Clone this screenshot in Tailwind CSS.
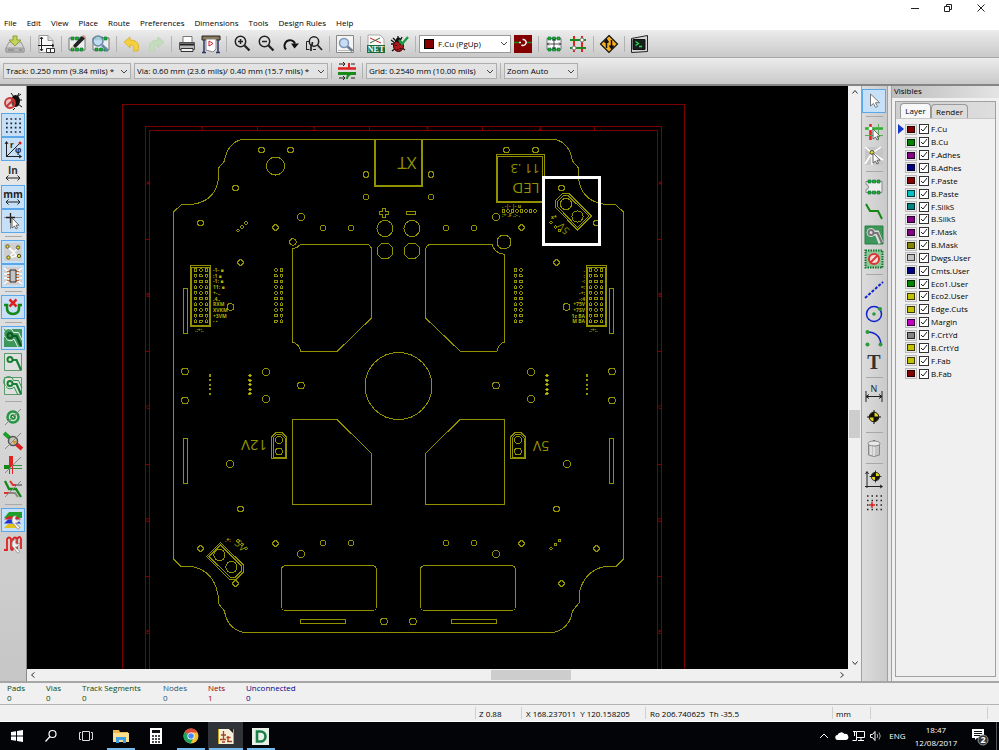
<!DOCTYPE html>
<html lang="en">
<head>
    <meta charset="UTF-8">
    <meta name="viewport" content="width=device-width, initial-scale=1.0">
    <title>Pcbnew</title>
    <script src="https://cdn.jsdelivr.net/npm/@tailwindcss/browser@4"></script>
</head>
<body class="h-screen flex flex-col overflow-hidden bg-[#f0f0f0] text-black text-[8px] leading-[10px] font-['Open_Sans',sans-serif]">
    <!-- Window controls -->
    <header class="bg-white shrink-0">
        <div class="flex justify-end h-4 pr-[2px]">
            <button class="w-[33px] flex items-center justify-center" aria-label="Minimize"><svg width="10" height="10" fill="none" stroke="#222"><path d="M1 5.500h8"/></svg></button>
            <button class="w-[33px] flex items-center justify-center" aria-label="Restore"><svg width="10" height="10" fill="none" stroke="#222"><path d="M1.500 3.500h5v5h-5zM3.500 3V1.500h5v5H7"/></svg></button>
            <button class="w-[33px] flex items-center justify-center" aria-label="Close"><svg width="10" height="10" fill="none" stroke="#222"><path d="M1.500 1.500l7 7M8.500 1.500l-7 7"/></svg></button>
        </div>
        <nav class="flex gap-[10px] h-[14px] px-1 items-center">
            <a href="#">File</a>
            <a href="#">Edit</a>
            <a href="#">View</a>
            <a href="#">Place</a>
            <a href="#">Route</a>
            <a href="#">Preferences</a>
            <a href="#">Dimensions</a>
            <a href="#">Tools</a>
            <a href="#">Design Rules</a>
            <a href="#">Help</a>
        </nav>
    </header>

    <!-- Main toolbar -->
    <div class="flex items-center h-7 shrink-0 pl-[3px] bg-linear-to-b from-[#ececec] to-[#c9c9c9] border-b border-[#a8a8a8]">
        <div class="flex items-center" data-tools="save | page | modedit viewlib | undo redo | print plot | zoomin zoomout redraw zoomfit | find | net drc |"></div>
        <div class="relative w-[92px]">
            <span class="absolute left-[5px] top-1 w-[10px] h-[10px] bg-[#840000] border border-black"></span>
            <select aria-label="Active layer" class="appearance-none w-full h-[18px] pl-[18px] bg-white border border-[#9a9a9a] outline-none"><option>F.Cu (PgUp)</option></select>
            <svg class="absolute right-[3px] top-[6px]" width="8" height="6" fill="none" stroke="#444"><path d="M1 1l3 3 3-3"/></svg>
        </div>
        <div class="flex items-center" data-tools="layerpair | module track | router | console"></div>
    </div>

    <!-- Track, via, grid and zoom choices -->
    <div class="flex items-center h-7 shrink-0 pl-[3px] bg-linear-to-b from-[#ececec] to-[#c9c9c9] border-b-2 border-[#858585]">
        <div class="relative w-[128px] mr-[3px]">
            <select aria-label="Track width" class="appearance-none w-full h-4 pl-[2px] bg-[#e3e3e3] border border-[#adadad] outline-none"><option>Track: 0.250 mm (9.84 mils) *</option></select>
            <svg class="absolute right-[3px] top-[6px]" width="8" height="6" fill="none" stroke="#444"><path d="M1 1l3 3 3-3"/></svg>
        </div>
        <div class="relative w-[194px]">
            <select aria-label="Via size" class="appearance-none w-full h-4 pl-[2px] bg-[#e3e3e3] border border-[#adadad] outline-none"><option>Via: 0.60 mm (23.6 mils)/ 0.40 mm (15.7 mils) *</option></select>
            <svg class="absolute right-[3px] top-[6px]" width="8" height="6" fill="none" stroke="#444"><path d="M1 1l3 3 3-3"/></svg>
        </div>
        <div class="flex items-center" data-tools="| autowidth |"></div>
        <div class="relative w-[131px]">
            <select aria-label="Grid" class="appearance-none w-full h-4 pl-[2px] bg-[#e3e3e3] border border-[#adadad] outline-none"><option>Grid: 0.2540 mm (10.00 mils)</option></select>
            <svg class="absolute right-[3px] top-[6px]" width="8" height="6" fill="none" stroke="#444"><path d="M1 1l3 3 3-3"/></svg>
        </div>
        <div class="flex items-center" data-tools="|"></div>
        <div class="relative w-[74px]">
            <select aria-label="Zoom" class="appearance-none w-full h-4 pl-[2px] bg-[#e3e3e3] border border-[#adadad] outline-none"><option>Zoom Auto</option></select>
            <svg class="absolute right-[3px] top-[6px]" width="8" height="6" fill="none" stroke="#444"><path d="M1 1l3 3 3-3"/></svg>
        </div>
    </div>

    <main class="flex flex-1 min-h-0 border-b-2 border-[#a6a6a6]">
        <div class="w-[27px] shrink-0 pt-[3px] pl-[1px] bg-linear-to-b from-[#ececec] to-[#c6c6c6] border-r border-[#8a8a8a]" data-tools="drcoff *grid *polar inch *mm *cursor - *ratsnest *modrats - *autodel - *zones zonesoff zonesout - padsketch viasketch tracksketch contrast - *layers wave"></div>

        <div class="flex-1 min-w-0 flex flex-col">
            <div class="flex flex-1 min-h-0">
                <svg class="flex-1 min-w-0 h-full bg-black" id="board" fill="none" shape-rendering="crispEdges" aria-label="Board"></svg>
                <div class="w-[13px] flex flex-col items-center bg-[#f0f0f0]">
                    <svg class="mt-[3px]" width="8" height="6" fill="none" stroke="#333"><path d="M1.500 4.500l2.500-3 2.500 3"/></svg>
                    <div class="flex-[314]"></div>
                    <div class="w-[11px] h-7 bg-[#cdcdcd]"></div>
                    <div class="flex-[222]"></div>
                    <svg class="mb-[3px]" width="8" height="6" fill="none" stroke="#333"><path d="M1.500 1.500l2.500 3 2.500-3"/></svg>
                </div>
            </div>
            <div class="flex items-center h-3 pr-[15px] bg-[#f0f0f0]">
                <svg class="ml-[3px]" width="6" height="8" fill="none" stroke="#333"><path d="M4.500 1.500l-3 2.500 3 2.500"/></svg>
                <div class="flex-[453]"></div>
                <div class="w-20 h-[10px] bg-[#cdcdcd]"></div>
                <div class="flex-[267]"></div>
                <svg class="mr-[1px]" width="6" height="8" fill="none" stroke="#333"><path d="M1.500 1.500l3 2.500-3 2.500"/></svg>
            </div>
        </div>

        <div class="w-[27px] shrink-0 pt-[3px] bg-linear-to-r from-[#dcdcdc] to-[#cacaca] border-x border-[#a0a0a0]" data-tools="*arrow - hilight localrats - addmodule addtrack addzone keepout - line circle arc text - dimension target - trash - origin gridorigin"></div>

        <!-- Layer manager -->
        <aside class="w-[111px] shrink-0 flex flex-col pl-[3px] bg-[#e4e4e4]">
            <div class="flex-1 flex flex-col border-l border-[#a0a0a0] bg-[#f0f0f0]">
                <h2 class="h-3 pl-[2px] bg-linear-to-r from-[#bdbdbd] to-[#e4e4e4]">Visibles</h2>
                <div class="flex-1 mt-[3px] mx-[3px] mb-1 flex flex-col border border-[#a0a0a0]">
                    <div class="flex items-end h-[17px] pl-1 bg-linear-to-r from-[#cfcfcf] to-[#dedede] border-b border-[#c8c8c8]">
                        <button class="h-[15px] w-[31px] bg-[#f8f8f8] border border-b-0 border-[#999] rounded-t-sm">Layer</button>
                        <button class="h-[14px] w-[37px] bg-[#dcdcdc] border border-b-0 border-[#999] rounded-t-sm">Render</button>
                    </div>
                    <ul class="mt-1 ml-1 h-[257px] grid auto-rows-fr" id="layers"></ul>
                </div>
            </div>
        </aside>
    </main>

    <!-- Board statistics -->
    <div class="flex shrink-0 h-[22px] pl-[7px] border-b border-[#b4b4b4] text-[#0b4a0b]">
        <div class="w-[39px]">Pads<br>0</div>
        <div class="w-9">Vias<br>0</div>
        <div class="w-[81px]">Track Segments<br>0</div>
        <div class="w-[45px] text-[#1f5577]">Nodes<br>0</div>
        <div class="w-[38px] text-[#960000]">Nets<br>1</div>
        <div class="text-[#000084]">Unconnected<br>0</div>
    </div>
    <div class="flex shrink-0 items-stretch h-[17px] py-[2px] leading-[13px] border-b border-white">
        <div class="flex-1 border-r border-[#d0d0d0]"></div>
        <div class="w-[46px] pl-[3px] border-r border-[#d0d0d0]">Z 0.88</div>
        <div class="w-[124px] pl-[4px] border-r border-[#d0d0d0]">X 168.237011&nbsp; Y 120.158205</div>
        <div class="w-[187px] pl-[4px] border-r border-[#d0d0d0]">Ro 206.740625&nbsp; Th -35.5</div>
        <div class="w-[38px] pl-[3px] border-r border-[#d0d0d0]">mm</div>
        <div class="w-[117px] border-r border-[#d0d0d0]"></div>
        <div class="w-[11px]"></div>
    </div>

    <!-- Taskbar -->
    <footer class="flex shrink-0 h-7 bg-[#020407] text-white">
        <button class="w-[33px] flex items-center justify-center" aria-label="Start"><svg width="14" height="14" fill="#fff"><path d="M1 3l5-.8v4.300H1zM7 2l6-1v5.500H7zM1 7.500h5v4.300L1 11zM7 7.500h6V13l-6-1z"/></svg></button>
        <button class="w-[35px] flex items-center justify-center" aria-label="Search"><svg width="14" height="14" fill="none" stroke="#fff" stroke-width="1.200"><circle cx="8.500" cy="5" r="3.500"/><path d="M6 7.500l-4.500 5"/></svg></button>
        <button class="w-[35px] flex items-center justify-center" aria-label="Task View"><svg width="16" height="14" fill="none" stroke="#ddd"><path d="M4.500 2.500h7v9h-7zM3 3.500H1.500v7H3M13 3.500h1.500v7H13"/></svg></button>
        <button class="w-[35px] flex items-end justify-center relative" aria-label="File Explorer">
            <svg class="mb-[6px]" width="18" height="16"><path d="M1 2h6l1 2h8v10H1z" fill="#e9b84e"/><path d="M1 5h16v9H1z" fill="#fbdf8c"/><path d="M4 15V9h10v6h-3v-3H7v3z" fill="#3ba0e6"/></svg>
            <span class="absolute bottom-0 w-7 h-[2px] bg-[#76b9ed]"></span>
        </button>
        <button class="w-[35px] flex items-center justify-center" aria-label="Calculator"><svg width="14" height="18"><path d="M1 1h12v16H1z" fill="#fff"/><path d="M3 3h8v3H3z" fill="#111"/><path d="M3 9h8M3 12h8M3 15h8" stroke="#111" stroke-width="1.500" stroke-dasharray="2 1"/></svg></button>
        <button class="w-[35px] flex items-center justify-center relative" aria-label="Chrome">
            <svg width="16" height="16"><circle cx="8" cy="8" r="7.500" fill="#f2c12e"/><path d="M8 8L1.500 4.200A7.500 7.500 0 0 1 14.600 4.500H8z" fill="#dd4b3e"/><path d="M8 8L1.500 4.200A7.500 7.500 0 0 0 7.500 15.500l3.300-6z" fill="#1da362"/><circle cx="8" cy="8" r="3.600" fill="#fff"/><circle cx="8" cy="8" r="2.800" fill="#4a8af4"/></svg>
            <span class="absolute bottom-0 w-7 h-[2px] bg-[#76b9ed]"></span>
        </button>
        <button class="w-[35px] flex items-center justify-center relative bg-[#303438]" aria-label="KiCad">
            <svg width="16" height="17"><path d="M0 1h16v15H0z" fill="#c9a71c"/><path d="M1 1h10l4 4v11H1z" fill="#f6efdc"/><path d="M11 1l4 4V1z" fill="#222"/><path d="M5.500 3v4M3 7h5M5.500 7v4M2 11.500h6M10 8v6M8.500 9.500h4M9 13.500h5M4 14h3" fill="none" stroke="#a94318" stroke-width="1.300"/></svg>
            <span class="absolute bottom-0 w-[34px] h-[2px] bg-[#76b9ed]"></span>
        </button>
        <button class="w-[35px] flex items-center justify-center relative" aria-label="DipTrace">
            <svg width="17" height="17"><path d="M0 0h17v17H0z" fill="#e8f0ea"/><path d="M5 3.500h3.500a5 5 0 0 1 0 10H5z" fill="none" stroke="#1c8048" stroke-width="2.600"/></svg>
            <span class="absolute bottom-0 w-7 h-[2px] bg-[#76b9ed]"></span>
        </button>
        <div class="flex-1"></div>
        <div class="flex items-center">
            <svg width="17" height="14" fill="none" stroke="#fff"><path d="M4 9l4-4 4 4"/></svg>
            <svg width="18" height="14" fill="#fff"><path d="M5 11a2.500 2.500 0 0 1-.5-5A4 4 0 0 1 11.500 5 3 3 0 0 1 13 11z"/></svg>
            <svg width="17" height="14" fill="none" stroke="#fff"><path d="M5.500 2.500h8v6h-8zM7 11.500h6M10 9v2M3.500 2v5M2 2.500h3M1.500 11.500h4v-3"/></svg>
            <svg width="16" height="14" fill="none" stroke="#fff"><path d="M2.500 5.500h2l2.500-3v9l-2.500-3h-2z"/><path d="M9 5q1.500 2 0 4M11 3.500q2.500 3.500 0 7" stroke="#aaa"/></svg>
            <span class="w-[27px] text-center">ENG</span>
            <div class="w-[50px] text-center leading-[13px]">18:47<br>12/08/2017</div>
            <button class="w-[35px] flex justify-center" aria-label="Notifications">
                <svg width="20" height="20"><path d="M3 3h12v9H8l-2 2v-2H3z" fill="#fff"/><path d="M5 5.500h8M5 7.500h8M5 9.500h6" stroke="#111"/><circle cx="14" cy="14" r="5" fill="#333" stroke="#999"/><text x="14" y="17" fill="#fff" font-size="9" font-weight="bold" text-anchor="middle">2</text></svg>
            </button>
            <span class="w-[3px] h-7 border-l border-[#555]"></span>
        </div>
    </footer>

    <script>
        const pads = '<path d="M4 3h3v3H4zM8.500 3h3v3h-3zM13 3h3v3h-3zM4 14h3v3H4zM8.500 14h3v3h-3zM13 14h3v3h-3z" fill="#21b421" stroke="#064" stroke-width=".6"/>';
        const pointer = '<path d="M9 7v10l2.500-2 1.500 3 1.500-.8-1.500-3H16z" fill="#fff" stroke="#555" stroke-width=".9"/>';
        const zone = '<path d="M18 18L13.500 8H9" stroke-width="2.200"/><circle cx="7" cy="7.500" r="2.500" stroke-width="2"/>';
        const halo = '<path d="M2.500 9.500a5 5 0 1 1 8-5H15.500L19 12M3 10.500a5 5 0 0 0 8 .5L15 19"/>';
        const lens = '<circle cx="8.500" cy="7.500" r="5.200" stroke="#222" stroke-width="1.500"/><path d="M12.500 11.500l5 5" stroke="#222" stroke-width="2.300"/>';
        const slash = '<path d="M2 18L18 2" stroke="#888"/>';
        const target = '<circle cx="10" cy="10" r="4.800" fill="#e5d51b" stroke="#111"/><path d="M10 10V5.500A4.500 4.500 0 0 1 14.500 10zM10 10v4.500A4.500 4.500 0 0 1 5.500 10z" fill="#111" transform="rotate(90 10 10)"/><path d="M10 3v14M3 10h14" stroke="#111"/>';
        const wrench = '<path d="M9 9.500a4 4 0 0 1 4-4l-1 3 2 1.500 2.500-1.500a4 4 0 0 1-4 4.500l5 4-2 2-5-5.500a4 4 0 0 1-1.500-4z" fill="#f2f2f2" stroke="#888" stroke-width=".7" transform="rotate(4 10 10)"/>';

        const icons = {
            save: '<path d="M4 8h12l3 6v4H1v-4z" fill="#d4d4d4" stroke="#999"/><path d="M1 14h18v4H1z" fill="#b5b5b5" stroke="#999"/><path d="M3 16h6M14 16h3" stroke="#777"/><path d="M8 2h4v4h4l-6 6-6-6h4z" fill="#c5d458" stroke="#8e9c38"/>',
            page: '<path d="M3 1.500h9l5 5v12H3z" fill="#fafafa" stroke="#999"/><path d="M12 1.500v5h5" fill="#ddd" stroke="#999"/><path d="M5.500 3v14M2 11.500h16M4 5l1.500-2L7 5M4 15l1.500 2L7 15M16 10l2 1.500-2 1.500" stroke="#222"/><path d="M10.500 14.500h8v4h-8zM14.500 14v4" fill="#fff" stroke="#333"/>',
            modedit: '<path d="M2 4v12h16V4z" fill="#eee" stroke="#777"/>' + pads + '<path d="M5 15l1.500-4L15 2l3 2.500-9 9z" fill="#222"/><path d="M5 15l1-3 2 1.500z" fill="#e8d090"/><path d="M15 2l3 2.500 1-1.500-2.500-2z" fill="#d88"/>',
            viewlib: '<path d="M2 4v12h16V4z" fill="#eee" stroke="#777"/>' + pads + '<circle cx="7" cy="7" r="5" fill="#bcd8f2" fill-opacity=".85" stroke="#6688a8" stroke-width="1.500"/><path d="M11 11l6 6" stroke="#6688a8" stroke-width="2.500"/>',
            undo: '<path d="M2 8l6-5v3c7 0 10 4 8 11h-5c2-4 0-6-3-6v3z" fill="#f5cf3c" stroke="#d8ae28" stroke-width=".8"/>',
            redo: '<path d="M18 8l-6-5v3C5 6 2 10 4 17h5c-2-4 0-6 3-6v3z" fill="#c3dcbb" stroke="#b8d2b0" stroke-width=".8"/>',
            print: '<path d="M6 2.500h9V9H6z" fill="#fff" stroke="#777"/><path d="M2.500 8.500h15v7h-15z" fill="#b8b8b8" stroke="#555"/><path d="M4 14.500h12v3H4z" fill="#f3f3f3" stroke="#333"/><path d="M3 10.500h14" stroke="#222" stroke-width="2"/>',
            plot: '<path d="M1 2h18v4H1z" fill="#8d7a58" stroke="#222"/><path d="M5 5h10v10l-3 3-7-2z" fill="#fff" stroke="#888"/><path d="M3 6v12M17 6v12M1 18.500h4M15 18.500h4" stroke="#2a3768" stroke-width="1.500"/><path d="M8 7l4 2.500-4 2.500z" stroke="#c23"/>',
            zoomin: lens + '<path d="M8.500 5v5M6 7.500h5" stroke="#222" stroke-width="1.500"/>',
            zoomout: lens + '<path d="M6 7.500h5" stroke="#222" stroke-width="1.500"/>',
            redraw: '<path d="M6 15.500A5.500 5.500 0 1 1 15 9.500" stroke="#111" stroke-width="2"/><path d="M11 9.500h8l-4.500 5z" fill="#111"/>',
            zoomfit: '<path d="M2.500 16V7.500h3M2.500 15.500h3M9 15.500h3" stroke="#222"/><circle cx="10" cy="7.500" r="4.700" stroke="#222" stroke-width="1.500"/><path d="M7 12q1.500-1 1.500-4M7 11v6M13.500 11l4.500 5" stroke="#222" stroke-width="1.700"/>',
            find: '<path d="M1.500 1.500h17v17h-17z" fill="#f5f5f5" stroke="#888"/><path d="M3 16.500h15" stroke="#bbb"/><circle cx="9" cy="9" r="4.500" fill="#c9def4" stroke="#7c97b8" stroke-width="1.500"/><path d="M12.500 12.500l5 4.500" stroke="#6c7d92" stroke-width="2.500"/>',
            net: '<path d="M2 1h12l4 4v7H2z" fill="#fafafa" stroke="#aaa"/><path d="M4 4l11 5" stroke="#c22"/><path d="M4 9l10-5" stroke="#363"/><path d="M1 11h18v8H1z" fill="#1a6b3c"/><text x="10" y="18" font-family="Liberation Serif" font-weight="bold" font-size="8" text-anchor="middle" fill="#fff">NET</text>',
            drc: '<path d="M3 4l4 4M12 3l-2 4M1 10h4M2 17l4-3M15 16l-3-2M1 6l4 3M8 2v4" stroke="#111" stroke-width="1.300"/><ellipse cx="8.500" cy="12" rx="5" ry="5.500" fill="#b1161c" stroke="#400"/><circle cx="8.500" cy="6" r="2.600" fill="#111"/><path d="M6 11v1M10.500 10v1M7.500 15v1M10.500 14v1" stroke="#111" stroke-width="1.800"/><path d="M9 6l3 4 6-7" stroke="#189a3c" stroke-width="2.300"/>',
            layerpair: '<path d="M1 1h18v18H1z" fill="#840000"/><path d="M1 8.500h5M14 8.500h5" stroke="#158a15" stroke-width="1.500"/><path d="M6 8.500h2M8.500 11a3 3 0 1 0 1-5.500M13 8.500h1" stroke="#eee" stroke-width="1.500"/>',
            module: '<path d="M3 4.500v11h14v-11z" fill="#fff" stroke="#777"/>' + pads + '<path d="M10 5v10M3 10h14M8.500 7L10 5.500 11.500 7M8.500 13l1.500 1.500 1.500-1.500M5 8.500L3.500 10 5 11.500M15 8.500l1.500 1.500-1.500 1.500" stroke="#222" stroke-width=".8"/>',
            track: '<path d="M6 2v16M14 2v16" stroke="#d22" stroke-width="2"/><path d="M2 6h16M2 14h16" stroke="#198a19" stroke-width="2"/><circle cx="6" cy="14" r="2" fill="#fff" stroke="#777"/><circle cx="14" cy="6" r="2" fill="#fff" stroke="#777"/>',
            router: '<path d="M10 1.500l8.500 8.500-8.500 8.500L1.500 10z" fill="#f4b021" stroke="#111" stroke-width="1.200"/><path d="M7.500 14V6M5.500 8.500l2-3 2 3M12.500 6v8M10.500 11.500l2 3 2-3" stroke="#111" stroke-width="1.500"/>',
            console: '<path d="M1.500 4.500l16-3v16l-16 1z" fill="#d8d8d8" stroke="#222"/><path d="M3 5.500h12v10H3z" fill="#15211b" stroke="#111"/><path d="M5.500 7.500l3 2-3 2M9 12.500h3" stroke="#3d5" stroke-width="1.300"/>',
            autowidth: '<path d="M1 7.500h18" stroke="#d22" stroke-width="2.500"/><path d="M1 12.500h18" stroke="#198a19" stroke-width="3"/><path d="M12 2v5" stroke="#d22" stroke-width="2"/><path d="M10 18q0-4 4-5" stroke="#198a19" stroke-width="2"/><path d="M2 3h6M6 1l2 2-2 2M18 3h-4M2 17h6M6 15l2 2-2 2M18 17h-4" stroke="#222"/>',
            drcoff: '<path d="M8 2l3 4M16 2l-2 4M15 9h4M15 13l4 3M14 6l4-3M12 17l-2 2" stroke="#111"/><ellipse cx="12.500" cy="10" rx="4.500" ry="6" fill="#111"/><circle cx="7" cy="12" r="5" fill="#d88" fill-opacity=".4" stroke="#c33" stroke-width="1.800"/><path d="M3.500 15.500l7-7" stroke="#c33" stroke-width="1.800"/>',
            grid: '<path d="M3 4h15M3 8.300h15M3 12.600h15M3 17h15" stroke="#223" stroke-width="1.700" stroke-dasharray="1.700 2.700"/>',
            polar: '<path d="M3.500 18V3M2 5l1.500-2.500L5 5M3 17.500h15M16 16l2.500 1.500L16 19M4 17L17 4" stroke="#222"/><circle cx="17" cy="4" r="1.500" fill="#e11"/><text x="7" y="9" font-size="8" font-weight="bold" fill="#222">r</text><text x="12" y="14" font-size="8" font-weight="bold" fill="#222">φ</text>',
            inch: '<text x="10" y="11" font-size="10" font-weight="bold" text-anchor="middle" fill="#333">In</text><path d="M3 15h14M5.500 12.500L3 15l2.500 2.500M14.500 12.500L17 15l-2.500 2.500" stroke="#222"/>',
            mm: '<text x="10" y="11" font-size="10" font-weight="bold" text-anchor="middle" fill="#222">mm</text><path d="M3 15h14M5.500 12.500L3 15l2.500 2.500M14.500 12.500L17 15l-2.500 2.500" stroke="#222"/>',
            cursor: '<path d="M7.500 2v10M3 6.500h9" stroke="#222" stroke-width="1.300"/><path d="M12 6.500h7M7.500 12v6M1 6.500h2" stroke="#888"/>' + pointer,
            ratsnest: '<path d="M1 1h18v18H1z" fill="#cfcfcf"/><path d="M4 4l12 12M16 5L5 16M4 4l7 6 5-5M5 16l8-2" stroke="#fff" stroke-width="1.300"/><g fill="#dcd81c" stroke="#554"><circle cx="4.500" cy="4.500" r="1.700"/><circle cx="15" cy="5.500" r="1.700"/><circle cx="5.500" cy="15.500" r="1.700"/><circle cx="16" cy="14" r="1.700"/></g>',
            modrats: '<path d="M1 1h18v18H1z" fill="#cfcfcf"/><path d="M1 2l6 5M19 2l-6 5M1 18l6-5M19 18l-6-5M1 8h6M13 8h6M1 12h6M13 12h6" stroke="#fff" stroke-width="1.500"/><path d="M4 5.500h12M4 8.500h12M4 11.500h12M4 14.500h12" stroke="#d62"/><path d="M7 4h6v12H7z" fill="#c4c4c4" stroke="#333"/>',
            autodel: '<path d="M1 8h3v3q0 6 6 6t6-6V8h3" stroke="#178717" stroke-width="2.600"/><path d="M6.500 2.500l7 7M13.500 2.500l-7 7" stroke="#d22" stroke-width="2.500"/>',
            zones: '<path d="M1 1h18v18H1z" fill="#3f965a"/><g stroke="#e8f5ea">' + halo + '</g><g stroke="#0c5a24">' + zone + '</g>',
            zonesoff: '<path d="M1.500 1.500h17v17h-17z" fill="#e0e0e0" stroke="#5c9a6a"/><g stroke="#158032">' + zone + '</g>',
            zonesout: '<path d="M1.500 1.500h17v17h-17z" fill="#e0e0e0" stroke="#5c9a6a"/><g stroke="#2a9446">' + halo + '</g><g stroke="#158032">' + zone + '</g>',
            padsketch: '<circle cx="10" cy="10" r="5.500" fill="#cde6d0" stroke="#2a9446" stroke-width="2.500"/><circle cx="10" cy="10" r="2" stroke="#158032" stroke-width="1.500"/>' + slash,
            viasketch: '<path d="M1 2l8 7" stroke="#1f9d2b" stroke-width="4"/><path d="M11 11l8 7" stroke="#d22" stroke-width="4"/><circle cx="10" cy="10" r="4.500" fill="#c5c5b5" stroke="#555" stroke-width="1.500"/><path d="M10 10h4l-3 3z" fill="#d80"/>' + slash,
            tracksketch: '<path d="M1 12h6" stroke="#178717" stroke-width="4"/><path d="M7 10.500h12M7 13.500h12" stroke="#2a9446"/><path d="M8 1v11" stroke="#d22" stroke-width="4"/><path d="M6.500 12v7M9.500 12v7" stroke="#d22"/>' + slash,
            contrast: '<path d="M2 2l4 8h7l5 8" stroke="#178717" stroke-width="2.300"/><path d="M7 2l3 4h3M1 14h5" stroke="#d33" stroke-width="2"/><path d="M13 6h6M6 14h6l3 4" stroke="#888" stroke-width="2"/>' + slash,
            layers: '<path d="M6 2h13v6H1z" fill="#1fa02b"/><path d="M1 9.500h17l-4-3H5z" fill="#d22"/><path d="M1 13.500h17l-4-4H5z" fill="#23c"/><path d="M1 18h17l-4-4H5z" fill="#e3c21b"/>' + wrench,
            wave: '<path d="M1 16h3V5q2-3 4 0v10q1 2 2 0V5q2-3 4 0v10M14 5q3-4 4 0v10" stroke="#d22" stroke-width="1.800"/>' + wrench,
            arrow: '<path d="M6.500 3v12l3-2.500 2 4 2-1-2-3.800h4z" fill="#fff" stroke="#777"/>',
            hilight: '<path d="M6.500 2v16" stroke="#d22" stroke-width="2.500"/><path d="M1 6.500h18" stroke="#2ab02a" stroke-width="2.500"/><path d="M14.500 2v16M1 13.500h18" stroke="#5a5"/><circle cx="6.500" cy="6.500" r="1.800" fill="#fff"/>' + pointer,
            localrats: '<path d="M1 1h18v18H1z" fill="#c6c6c6"/><path d="M1 1l7 6 9-6M8 7l-7 11M8 7v12M8 7l11 7" stroke="#fff" stroke-width="1.500"/><circle cx="8" cy="6.500" r="2" fill="#dcd81c" stroke="#554"/>' + pointer,
            addmodule: '<path d="M2 4.500v3a2.500 2.500 0 0 1 0 5v3h16v-11z" fill="#eee" stroke="#888"/>' + pads,
            addtrack: '<path d="M2 3l4 7h8l4 8" stroke="#178717" stroke-width="2"/>',
            addzone: '<path d="M1 1h18v18H1z" fill="#3f965a" stroke="#278040"/><path d="M17 18L13 8H9" stroke="#ddd" stroke-width="5"/><circle cx="7" cy="7.500" r="4" fill="#ddd" stroke="#ddd"/><g stroke="#777">' + zone + '</g>',
            keepout: '<path d="M1.500 1.500h17v17h-17z" fill="#8fc79c" stroke="#12752c" stroke-width="2" stroke-dasharray="1.500 1"/><circle cx="10" cy="10" r="5" fill="#f3dede" stroke="#d33" stroke-width="2"/><path d="M6.500 13.500l7-7" stroke="#d33" stroke-width="2"/>',
            line: '<path d="M1 18L19 2" stroke="#12c" stroke-width="2" stroke-dasharray="3 1.500"/>',
            circle: '<circle cx="10" cy="10" r="7.500" stroke="#12c" stroke-width="1.500"/><circle cx="10" cy="10" r="1.800" fill="#2a9a3a"/><circle cx="16" cy="5" r="2" fill="#2a9a3a"/>',
            arc: '<path d="M3 4q13 0 14 13" stroke="#12c" stroke-width="1.500"/><g fill="#2a9a3a"><circle cx="3.500" cy="4" r="2"/><circle cx="3.500" cy="16.500" r="2"/><circle cx="16.500" cy="16.500" r="2"/></g>',
            text: '<text x="10" y="17" font-family="Liberation Serif" font-weight="bold" font-size="20" text-anchor="middle" fill="#333">T</text>',
            dimension: '<path d="M2 8v11M18 8v11M2 13.500h16M5 11.500l-3 2 3 2M15 11.500l3 2-3 2" stroke="#222"/><text x="10" y="9" font-size="9" text-anchor="middle" fill="#222">N</text>',
            target: target,
            trash: '<path d="M4.500 6h11v11q-5.500 3-11 0z" fill="#c4c4c4" stroke="#888"/><path d="M7 8v9M10 8v10" stroke="#e8e8e8" stroke-width="1.500"/><ellipse cx="10" cy="5.500" rx="6" ry="2.500" fill="#e8e8e8" stroke="#888"/><path d="M9 2.500h2" stroke="#777"/>',
            origin: '<path d="M3 19V3M1.500 5L3 2.500 4.500 5M1 17.500h17M16 16l2.500 1.500L16 19" stroke="#222"/><g transform="translate(3 -1) scale(.85)">' + target + '</g>',
            gridorigin: '<path d="M3 3h15M3 7.500h15M3 12h15M3 16.500h15" stroke="#222" stroke-width="1.500" stroke-dasharray="1.500 3"/><path d="M8 9v6M5 12h6" stroke="#d22" stroke-width="1.500"/>'
        };

        // "|" and "-" are separators, "*" marks a pressed button
        document.querySelectorAll('[data-tools]').forEach(bar => {
            bar.innerHTML = bar.dataset.tools.trim().split(/\s+/).map(name => {
                if (name === '|') return '<span class="w-[7px] h-4 flex justify-center"><span class="border-l border-[#b2b2b2]"></span></span>';
                if (name === '-') return '<div class="h-[7px] w-6 flex items-center justify-center"><span class="w-[17px] border-t border-[#a8a8a8]"></span></div>';
                const pressed = name[0] === '*';
                if (pressed) name = name.slice(1);
                const look = pressed
                    ? 'w-6 h-6 flex items-center justify-center border border-[#5aa7ea] bg-[#c6e0f8]'
                    : 'w-6 h-6 flex items-center justify-center';
                return `<button class="${look}" aria-label="${name}"><svg class="shrink-0" width="20" height="20" viewBox="0 0 20 20" fill="none">${icons[name]}</svg></button>`;
            }).join('');
        });

        const layers = [
            ['F.Cu', '#840000'], ['B.Cu', '#008400'], ['F.Adhes', '#840084'], ['B.Adhes', '#000084'],
            ['F.Paste', '#840000'], ['B.Paste', '#00c2c2'], ['F.SilkS', '#008484'], ['B.SilkS', '#840084'],
            ['F.Mask', '#840084'], ['B.Mask', '#848400'], ['Dwgs.User', '#c2c2c2'], ['Cmts.User', '#000084'],
            ['Eco1.User', '#008400'], ['Eco2.User', '#c2c200'], ['Edge.Cuts', '#c2c200'], ['Margin', '#c200c2'],
            ['F.CrtYd', '#848484'], ['B.CrtYd', '#c2c200'], ['F.Fab', '#c2c200'], ['B.Fab', '#840000']
        ];
        document.getElementById('layers').innerHTML = layers.map(([name, color], i) => `
            <li class="flex items-center relative">
                ${i === 0 ? '<svg class="absolute -left-[2px]" width="6" height="10"><path d="M0 0l6 5-6 5z" fill="#1438c8"/></svg>' : ''}
                <span class="ml-[5px] w-3 h-[11px] border border-[#bbb] bg-[#e8e8e8] p-[1px]"><span class="block w-full h-full border border-black/70" style="background:${color}"></span></span>
                <label class="flex items-center">
                    <input type="checkbox" checked class="peer appearance-none ml-[2px] w-[10px] h-[10px] border border-[#333] bg-white">
                    <svg class="absolute left-[20px] hidden peer-checked:block" width="8" height="8" fill="none" stroke="#222"><path d="M1 4l2 2 4-5"/></svg>
                    <span class="ml-[2px]">${name}</span>
                </label>
            </li>`).join('');

        // ---- board drawing, in board units; everything in "half" is mirrored about the centre line
        const ring = (x, y, r) => `<circle cx="${x}" cy="${y}" r="${r}"/>`;
        const box = (x, y, w, h, r = 0) => `<rect x="${x}" y="${y}" width="${w}" height="${h}" rx="${r}"/>`;

        let half = '<path d="M398.500 139H243Q227 143 224.500 161L218.500 168V178Q216 201 192 204.500H181.500L173.500 212V559L181 566.500H192Q214 571 218 595V603L224.500 611Q227 628 243 632.500H398.500"/>';
        half += '<path d="M292.500 419.500H337L371.500 453.500V504.500H292.500z"/>';
        half += box(281.5, 565.5, 95, 45, 4) + box(300.5, 619.5, 45, 4) + box(183.5, 438.5, 4, 45) + box(183.5, 288.5, 4, 45);
        [[261.5, 150], [290.5, 150], [235.5, 188], [366, 174.5], [366, 197], [200.5, 223], [275.5, 227.5], [323, 228], [351, 228],
         [240.5, 262.5], [240.5, 509], [200.5, 548.5], [275.5, 543.5], [323, 543], [351, 543], [235.5, 583.5]].forEach(p => half += ring(p[0], p[1], 2.8));
        [[301, 217], [230.5, 307], [185, 371.5], [185, 400.5], [266, 372], [266, 399], [301, 385.5], [230, 464], [301, 554], [384, 621.5]].forEach(p => half += ring(p[0], p[1], 3.4));
        half += ring(385, 228.5, 8) + ring(385, 251, 8);
        half += box(190.5, 265.5, 20, 61) + box(191.5, 267.5, 18, 58);
        for (let i = 0; i < 10; i++) {
            const y = 270 + i * 5.7;
            [195.5, 201, 206.5, 276, 281.5].forEach(x => half += ring(x, y, 1.4));
        }
        half += '<path d="M271.500 458V437L276 432.500H282L286.500 437V458zM273 457V438L277 434H281L285 438V457z"/>' + ring(279, 440, 3.4) + ring(279, 451.5, 3.4);
        for (let i = 0; i < 5; i++) half += ring(210, 375.5 + i * 4.6, 0.8) + `<circle cx="250" cy="${375.5 + i * 4.6}" r="1.200" fill="#c2c200"/>`;

        let single = ring(398.5, 386, 33.5) + ring(275.5, 166, 9) + ring(293, 242, 3.2) + ring(504, 242, 7);
        single += '<path d="M301 244H366Q371.500 245 371.500 250V318L337 351.500H301Q299 344 292.500 342V249L297.500 247z"/>';
        single += '<path d="M431 244H492Q494 253 504.500 254.500V342Q498 344 497 351.500H460.500L425.500 318V250Q426 245 431 244z"/>';
        single += box(374.5, 139, 48, 47) + box(375.5, 139, 46, 46) + box(496, 154.5, 48, 48) + box(497.5, 156, 45, 45);
        single += '<path d="M382.500 208.500h3v3h3v3h-3v3h-3v-3h-3v-3h3z"/>' + box(406.5, 211.5, 9, 3);
        single += '<path d="M555 201L562.500 193.500H569L591.500 216 577.500 230 555 207zM557 202L563.500 195.500H568L589 216 577.500 227.500 557 206z"/>' + ring(566, 204, 5.6) + ring(577.5, 216.5, 5.6);
        single += '<path d="M220.500 542.500L243.500 565V572L236.500 579H229L206.500 556.500zM220.500 545L241.500 566V571L235.500 577H230L209 556.500z"/>' + ring(219.5, 555, 5.6) + ring(231.5, 567, 5.6);
        [[238, 230.5], [242, 227], [246, 223], [551, 548.5], [555.5, 544.5], [559.5, 540.5], [551, 222.5], [555.5, 227], [559.5, 230.5], [238, 541], [242, 544.5], [246, 548.5]].forEach(p => single += ring(p[0], p[1], 1.3));
        for (let i = 0; i < 8; i++) single += ring(503.5 + i * 4.5, 211, 1.4);

        // silk labels, read from the other side of the board
        const label = (x, y, size, angle, str) => `<text transform="translate(${x} ${y}) rotate(${angle})" font-size="${size}" text-anchor="middle" fill="#929200" stroke="none">${str}</text>`;
        single += label(407, 157, 17, 180, 'XT') + label(526, 183, 15, 180, 'LED') + label(525, 164, 13, 180, '11 .3');
        single += label(254, 440, 15, 180, '12V') + label(541, 441, 14, 180, '5V') + label(566, 226, 10, 225, '5V') + label(238, 548, 10, 45, '5V');

        // fine pin legends next to the connectors
        let legend = '';
        const tiny = (x, y, str) => legend += `<text x="${x}" y="${y}" font-size="5" font-weight="bold" fill="#b0b000">${str}</text>`;
        ['-1-  ■', ':1  ■', '-1:  ■', '11:  ■', '+-.,', ',4.,', 'RXM', 'XVKM', '+3VM', '-   ▪'].forEach((s, i) => tiny(213, 272 + i * 5.7, s));
        ['.', ':', '-:', '=:', '-+:', '-:4', '+75V', '+7SV', '1z BA', 'M BA'].forEach((s, i) => legend += `<text x="585" y="${272 + i * 5.7}" font-size="5" font-weight="bold" text-anchor="end" fill="#b0b000">${s}</text>`);
        tiny(195, 332, '.:+:.');
        tiny(589, 332, '.:+:.');
        tiny(502, 208, '. -|- |- u');
        tiny(502, 217, ':+ .F .:- .');
        tiny(551, 219, 'x*');
        tiny(225, 542, '.*:');

        // sheet frame with its row and column marks
        let frame = box(122.5, 104.5, 562, 700) + box(145.5, 126.5, 516, 700) + box(149.5, 130.5, 508, 700);
        [257, 369, 482, 594].forEach(x => frame += `<path d="M${x}.500 126v5"/>`);
        [239, 351, 464, 576].forEach(y => frame += `<path d="M145 ${y}.500h5M657 ${y}.500h5"/>`);
        [202, 314, 427, 540].forEach((x, i) => frame += `<text x="${x}" y="131" font-size="5" text-anchor="middle" fill="#c40000" stroke="none">${i + 1}</text>`);
        [183, 295, 407, 520, 632].forEach((y, i) => [147.5, 659.5].forEach(x => frame += `<text x="${x}" y="${y + 2}" font-size="5" text-anchor="middle" fill="#c40000" stroke="none">${'ABCDE'[i]}</text>`));

        document.getElementById('board').innerHTML = `
            <g transform="translate(-27 -86)">
                <g stroke="#7a0000">${frame}</g>
                <g stroke="#929200">
                    <g>${half}</g>
                    <g transform="translate(797 0) scale(-1 1)">${half}</g>
                    ${single}
                </g>
                ${legend}
                <rect x="543.500" y="177.500" width="56" height="67" stroke="#fff" stroke-width="3"/>
            </g>`;
    </script>
</body>
</html>
